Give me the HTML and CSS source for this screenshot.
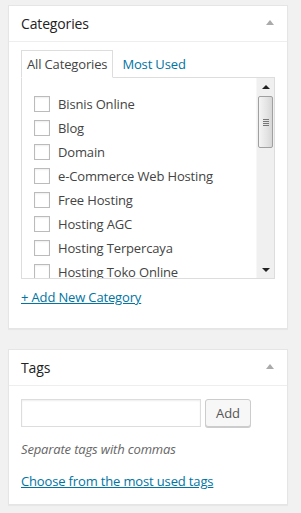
FILE: index.html
```html
<!DOCTYPE html>
<html lang="id">
<head>
  <meta charset="UTF-8">
  <title>Categories and Tags</title>
  <link rel="stylesheet" href="styles.css">
</head>
<body>
  <div class="postbox">
    <div class="hndle">
      <h3>Categories</h3>
      <svg class="toggle" width="8" height="5" viewBox="0 0 8 5"><path d="M4 0L8 5H0z" fill="#aaa"/></svg>
    </div>
    <div class="inside">
      <ul class="category-tabs">
        <li class="tabs">All Categories</li>
        <li><a href="#">Most Used</a></li>
      </ul>
      <div class="tabs-panel">
        <ul class="categorychecklist">
          <li><span class="check"></span>Bisnis Online</li>
          <li><span class="check"></span>Blog</li>
          <li><span class="check"></span>Domain</li>
          <li><span class="check"></span>e-Commerce Web Hosting</li>
          <li><span class="check"></span>Free Hosting</li>
          <li><span class="check"></span>Hosting AGC</li>
          <li><span class="check"></span>Hosting Terpercaya</li>
          <li><span class="check"></span>Hosting Toko Online</li>
        </ul>
        <div class="scrollbar">
          <div class="sb-btn"><span class="arrow-up"></span></div>
          <div class="sb-thumb"><span class="grip"></span></div>
          <div class="sb-track"></div>
          <div class="sb-btn"><span class="arrow-down"></span></div>
        </div>
      </div>
      <p class="adder"><a href="#">+ Add New Category</a></p>
    </div>
  </div>

  <div class="postbox">
    <div class="hndle">
      <h3>Tags</h3>
      <svg class="toggle" width="8" height="5" viewBox="0 0 8 5"><path d="M4 0L8 5H0z" fill="#aaa"/></svg>
    </div>
    <div class="inside tags">
      <div class="tag-row">
        <input type="text" class="newtag">
        <button class="button">Add</button>
      </div>
      <p class="howto">Separate tags with commas</p>
      <p class="cloud-link"><a href="#">Choose from the most used tags</a></p>
    </div>
  </div>
</body>
</html>
```

FILE: styles.css
```css
body { margin: 0; padding: 5px 13px 0 8px; background: #f1f1f1; font-family: "Open Sans", "Liberation Sans", sans-serif; font-size: 13px; letter-spacing: -0.15px; color: #444; }
a { color: #0074a2; }
ul { list-style: none; margin: 0; padding: 0; }

.postbox { width: 278px; background: #fff; border: 1px solid #e5e5e5; box-shadow: 0 1px 1px rgba(0,0,0,.04); margin-bottom: 20px; }
.hndle { height: 35px; border-bottom: 1px solid #eee; display: flex; align-items: center; justify-content: space-between; padding: 0 13px 0 12px; }
.hndle h3 { margin: 0; font-size: 14px; font-weight: normal; color: #222; line-height: 35px; }
.toggle { display: block; margin-top: -2px; }

.inside { padding: 8px 12px 22px; }

.category-tabs { display: flex; gap: 3px; margin-bottom: -1px; }
.category-tabs li { padding: 4px 5px; line-height: 18px; border: 1px solid transparent; }
.category-tabs li.tabs { border-color: #ddd; border-bottom-color: #fff; background: #fff; position: relative; }
.category-tabs a { text-decoration: none; }

.tabs-panel { height: 200px; border: 1px solid #ddd; display: flex; overflow: hidden; }
.categorychecklist { flex: 1; padding: 14px 0 0 12px; overflow: hidden; }
.categorychecklist li { display: flex; align-items: center; height: 24px; line-height: 24px; white-space: nowrap; }
.check { width: 14px; height: 14px; border: 1px solid #bbb; background: #fff; box-shadow: inset 0 1px 2px rgba(0,0,0,.07); margin-right: 8px; flex: none; }

.scrollbar { width: 17px; display: flex; flex-direction: column; background: #f0f0f0; border-left: 1px solid #f7f7f7; }
.sb-btn { height: 17px; display: flex; align-items: center; justify-content: center; }
.arrow-up { width: 0; height: 0; border-left: 4px solid transparent; border-right: 4px solid transparent; border-bottom: 4px solid #222; }
.arrow-down { width: 0; height: 0; border-left: 4px solid transparent; border-right: 4px solid transparent; border-top: 4px solid #222; }
.sb-thumb { height: 50px; margin: 1px 1px 0; border: 1px solid #a0a0a0; border-radius: 2px; background: linear-gradient(to right, #f4f4f4, #e4e4e4 60%, #d6d6d6); display: flex; align-items: center; justify-content: center; }
.grip { width: 6px; height: 7px; background: repeating-linear-gradient(to bottom, #777 0 1px, transparent 1px 2px); }
.sb-track { flex: 1; }

.adder { margin: 9px 0 0; line-height: 18px; }

.tags { padding: 13px 12px 14px; }
.tag-row { display: flex; gap: 4px; align-items: flex-start; }
.newtag { width: 180px; height: 28px; box-sizing: border-box; margin: 0; border: 1px solid #ddd; box-shadow: inset 0 1px 2px rgba(0,0,0,.07); font: inherit; }
.button { height: 28px; width: 46px; padding: 0; border: 1px solid #ccc; border-radius: 3px; background: #f7f7f7; box-shadow: 0 1px 0 #ccc; color: #555; font: inherit; }
.howto { margin: 13px 0 0; line-height: 18px; font-style: italic; color: #666; }
.cloud-link { margin: 14px 0 0; line-height: 18px; }
```
